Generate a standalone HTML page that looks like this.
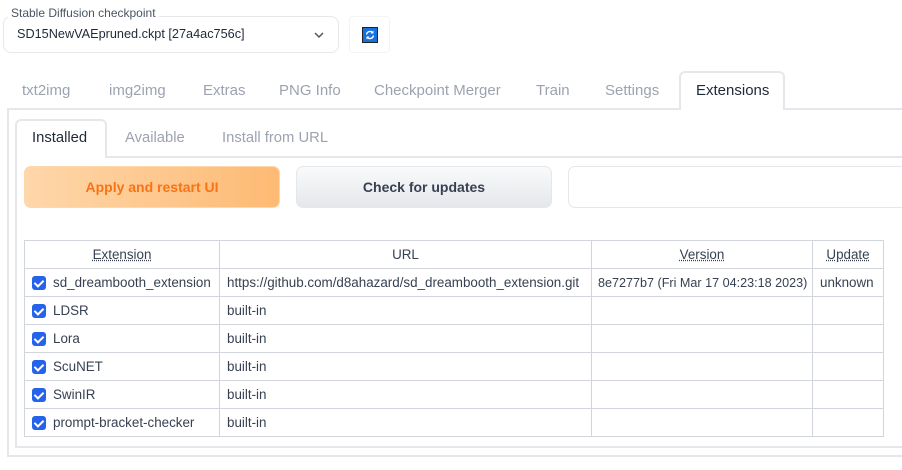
<!DOCTYPE html>
<html><head><style>
*{box-sizing:border-box;margin:0;padding:0}
body{width:902px;height:470px;background:#fff;font-family:"Liberation Sans",sans-serif;font-size:13px;color:#374151;position:relative;overflow:hidden}
.abs{position:absolute}
.tab{position:absolute;top:82px;font-size:15px;color:#9ca3af}
.sub{position:absolute;top:130px;font-size:14.8px;color:#9ca3af}
table{position:absolute;left:24px;top:240px;border-collapse:collapse;font-size:13.4px;table-layout:fixed;width:859px}
td,th{border:1px solid #d1d5db;height:28px;padding:0 7px;white-space:nowrap;overflow:hidden}
th{font-weight:normal;text-align:center;color:#374151}
th u{text-decoration:underline dotted}
.v{font-size:12.6px;padding:0 6px}
.cb{display:inline-block;width:14px;height:14px;background:#2563eb;border-radius:3px;vertical-align:-3px;margin-right:7px;position:relative}
.cb:after{content:"";position:absolute;left:4px;top:2px;width:4px;height:7px;border:solid #fff;border-width:0 2px 2px 0;transform:rotate(45deg)}
</style></head><body>
<div class="abs" style="left:3px;top:16px;width:336px;height:37px;border:1px solid #e5e7eb;border-radius:8px"></div>
<div class="abs" style="left:8px;top:6px;background:#fff;padding:0 3px;font-size:12px;color:#4b5563">Stable Diffusion checkpoint</div>
<div class="abs" style="left:17px;top:27px;font-size:12.7px;color:#1f2937">SD15NewVAEpruned.ckpt [27a4ac756c]</div>
<svg class="abs" style="left:313px;top:30px" width="12" height="10"><path d="M2 3 L6 7 L10 3" stroke="#555" stroke-width="1.5" fill="none"/></svg>
<div class="abs" style="left:349px;top:16px;width:41px;height:37px;border:1px solid #f3f4f6;border-radius:4px"></div>
<div class="abs" style="left:362px;top:27px;width:16px;height:16px;background:#1670e0;border:1px solid #222"></div>
<svg class="abs" style="left:362px;top:27px" width="16" height="16"><path d="M4.5 7.5 A3.6 3.6 0 0 1 11 6 M11.5 8.5 A3.6 3.6 0 0 1 5 10" stroke="#fff" stroke-width="1.4" fill="none"/><path d="M11.5 3.5 L11.5 6.5 L8.5 6.5Z M4.5 12.5 L4.5 9.5 L7.5 9.5Z" fill="#fff"/></svg>

<div class="tab" style="left:22px">txt2img</div>
<div class="tab" style="left:109px">img2img</div>
<div class="tab" style="left:203px">Extras</div>
<div class="tab" style="left:279px">PNG Info</div>
<div class="tab" style="left:374px">Checkpoint Merger</div>
<div class="tab" style="left:536px">Train</div>
<div class="tab" style="left:605px">Settings</div>
<div class="abs" style="left:7px;top:108px;width:900px;height:349px;border:2px solid #e5e7eb;border-right:none"></div>
<div class="abs" style="left:679px;top:71px;width:106px;height:39px;border:2px solid #e5e7eb;border-bottom:none;border-radius:6px 6px 0 0;background:#fff"></div>
<div class="tab" style="left:696px;color:#1f2937">Extensions</div>

<div class="abs" style="left:15px;top:156px;width:890px;height:292px;border:2px solid #e5e7eb;border-right:none"></div>
<div class="abs" style="left:15px;top:119px;width:92px;height:39px;border:2px solid #e5e7eb;border-bottom:none;border-radius:6px 6px 0 0;background:#fff"></div>
<div class="sub" style="left:32px;color:#1f2937">Installed</div>
<div class="sub" style="left:125px">Available</div>
<div class="sub" style="left:222px">Install from URL</div>

<div class="abs" style="left:24px;top:166px;width:256px;height:42px;border-radius:7px;background:linear-gradient(90deg,#fed7aa,#fdba74);border:1px solid #fed7aa;color:#f97316;font-size:14px;font-weight:bold;text-align:center;line-height:40px">Apply and restart UI</div>
<div class="abs" style="left:296px;top:166px;width:256px;height:42px;border-radius:7px;background:linear-gradient(#f9fafb,#e5e7eb);border:1px solid #e5e7eb;color:#374151;font-size:14px;font-weight:bold;text-align:center;line-height:40px">Check for updates</div>
<div class="abs" style="left:568px;top:166px;width:340px;height:42px;border-radius:7px;border:1px solid #e5e7eb"></div>

<table>
<colgroup><col style="width:195px"><col style="width:372px"><col style="width:221px"><col style="width:71px"></colgroup>
<tr><th><u>Extension</u></th><th>URL</th><th><u>Version</u></th><th><u>Update</u></th></tr>
<tr><td><span class="cb"></span>sd_dreambooth_extension</td><td>https://github.com/d8ahazard/sd_dreambooth_extension.git</td><td class="v">8e7277b7 (Fri Mar 17 04:23:18 2023)</td><td>unknown</td></tr>
<tr><td><span class="cb"></span>LDSR</td><td>built-in</td><td></td><td></td></tr>
<tr><td><span class="cb"></span>Lora</td><td>built-in</td><td></td><td></td></tr>
<tr><td><span class="cb"></span>ScuNET</td><td>built-in</td><td></td><td></td></tr>
<tr><td><span class="cb"></span>SwinIR</td><td>built-in</td><td></td><td></td></tr>
<tr><td><span class="cb"></span>prompt-bracket-checker</td><td>built-in</td><td></td><td></td></tr>
</table>
</body></html>
